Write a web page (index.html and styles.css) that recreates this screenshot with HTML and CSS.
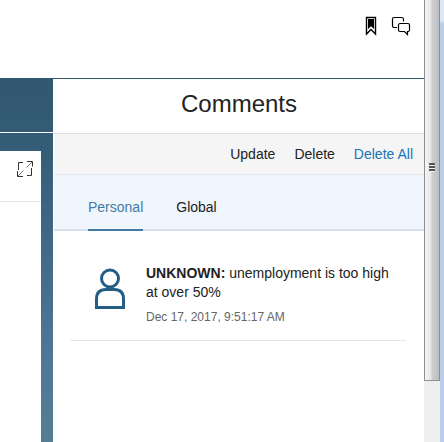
FILE: index.html
```html
<!DOCTYPE html>
<html lang="en">
<head>
    <meta charset="UTF-8">
    <meta name="viewport" content="width=device-width, initial-scale=1.0">
    <title>Comments</title>
    <link rel="stylesheet" href="styles.css">
</head>
<body>

<div class="app">
    <header class="topbar">
        <button class="icon-btn" type="button" aria-label="Bookmarks">
            <svg width="12" height="20" viewBox="0 0 12 20">
                <path d="M1.500 1.500h9v16.500L6 13.500 1.500 18z" fill="#fff" stroke="#000" stroke-width="1.400"/>
                <path d="M3 3h6v10L6 10.300 3 13z" fill="#000"/>
            </svg>
        </button>
        <button class="icon-btn" type="button" aria-label="Comments">
            <svg width="20" height="20" viewBox="0 0 20 20" fill="none" stroke="#000" stroke-width="1.200">
                <path d="M6 11.500H3Q1.500 11.500 1.500 9.500V3Q1.500 1.500 3 1.500H10.500Q12.500 1.500 12.500 3.500V5.500"/>
                <path d="M9 7.500H17Q18.500 7.500 18.500 9V14Q18.500 15.500 17 15.500H16.500V18.500L13.500 15.500H9Q7.500 15.500 7.500 14V9Q7.500 7.500 9 7.500z"/>
            </svg>
        </button>
    </header>

    <div class="workspace">
        <main class="canvas">
            <div class="canvas-header"></div>
            <div class="canvas-body">
                <section class="card">
                    <div class="card-header">
                        <button class="icon-btn" type="button" aria-label="Full screen">
                            <svg width="16" height="16" viewBox="0 0 16 16" fill="none" stroke="#333">
                                <path d="M6 1.500H1.500V9M10 14.500H14.500V7M10 .5H15.500V5.500M.5 10V15.500H6"/>
                                <path d="M15 1L9.500 6.500M1 15L6.500 9.500" stroke="#777"/>
                            </svg>
                        </button>
                    </div>
                </section>
            </div>
        </main>

        <aside class="panel">
            <h1 class="panel-title">Comments</h1>
            <div class="toolbar">
                <button class="text-btn" type="button">Update</button>
                <button class="text-btn" type="button">Delete</button>
                <button class="text-btn text-btn-blue" type="button">Delete All</button>
            </div>
            <nav class="tabs">
                <a class="tab active" href="#personal">Personal</a>
                <a class="tab" href="#global">Global</a>
            </nav>
            <div class="comments" id="personal">
                <article class="comment">
                    <svg class="avatar" width="32" height="42" viewBox="0 0 32 42" fill="none" stroke="#235d84" stroke-width="3">
                        <circle cx="16" cy="10.500" r="8.500"/>
                        <path d="M2.500 39.500V31Q2.500 21.500 12 21.500H20Q29.500 21.500 29.500 31V39.500z"/>
                    </svg>
                    <div class="comment-content">
                        <p class="comment-text"><strong>UNKNOWN:</strong> <span>unemployment is too high at over 50%</span></p>
                        <time class="comment-date">Dec 17, 2017, 9:51:17 AM</time>
                    </div>
                </article>
            </div>
        </aside>
    </div>
</div>

<div class="scrollbar">
    <div class="scroll-thumb">
        <span class="grip"></span>
    </div>
</div>
<div class="window-edge"></div>

</body>
</html>
```
FILE: styles.css
```css
* {
    box-sizing: border-box;
}

body {
    display: flex;
    min-height: 100vh;
    margin: 0;
    font-family: "Liberation Sans", Arial, sans-serif;
    font-size: 14px;
    color: #222;
    background-color: #fff;
}

button {
    padding: 0;
    border: none;
    background: none;
    font: inherit;
    color: inherit;
    cursor: pointer;
}

.app {
    flex: 1;
    min-width: 0;
    display: flex;
    flex-direction: column;
}

.topbar {
    display: flex;
    justify-content: flex-end;
    gap: 14px;
    padding: 16px 13px 42px;
    border-bottom: 1px solid #31586f;
}

.icon-btn {
    display: flex;
}

.workspace {
    flex: 1;
    display: flex;
}

.canvas {
    flex: 1;
    display: flex;
    flex-direction: column;
    background: linear-gradient(#31586f, #365d78 20%, #4d7798 75%, #557d94);
}

.canvas-header {
    height: 54px;
    border-bottom: 1px solid #fff;
}

.canvas-body {
    flex: 1;
    display: flex;
    padding: 18px 12px 0 0;
}

.card {
    flex: 1;
    background-color: #fff;
}

.card-header {
    display: flex;
    justify-content: flex-end;
    padding: 10px 8px 24px;
    border-bottom: 1px solid #e8e8e8;
}

.panel {
    width: 371px;
    padding-left: 1px;
    background-color: #fff;
}

.panel-title {
    margin: 0;
    padding: 10px 0 14px;
    border-bottom: 1px solid #ddd;
    font-size: 24px;
    line-height: 30px;
    font-weight: normal;
    text-align: center;
}

.toolbar {
    display: flex;
    justify-content: flex-end;
    gap: 19px;
    padding: 10px 11px;
    border-bottom: 1px solid #e5e9ec;
    background-color: #f5f5f5;
}

.text-btn {
    line-height: 20px;
}

.text-btn-blue {
    color: #1a74b4;
}

.tabs {
    display: flex;
    gap: 33px;
    padding: 0 34px;
    background-color: #eff6fd;
    box-shadow: inset 0 -2px #d5e2ec;
}

.tab {
    padding: 22px 0 12px;
    border-bottom: 2px solid transparent;
    line-height: 20px;
    color: #222;
    text-decoration: none;
}

.tab.active {
    border-color: #427ca6;
    color: #427ca6;
}

.comments {
    padding: 33px 18px 0 16px;
}

.comment {
    display: flex;
    gap: 20px;
    padding: 0 12px 14px 24px;
    border-bottom: 1px solid #e5e5e5;
}

.avatar {
    flex: none;
    margin-top: 4px;
}

.comment-text {
    margin: 0;
    line-height: 19px;
}

.comment-date {
    display: block;
    margin-top: 7px;
    padding-bottom: 1px;
    font-size: 12px;
    line-height: 16px;
    color: #666;
}

.scrollbar {
    width: 16px;
    display: flex;
    flex-direction: column;
    background-color: #efefef;
}

.scroll-thumb {
    height: 381px;
    display: flex;
    justify-content: center;
    padding-top: 163px;
    border: 1px solid #8e8e93;
    border-top: none;
    background: linear-gradient(to right, #f5f5f5, #e6e6e8 40%, #cfcfd3 50%, #bdbdc2);
}

.grip {
    width: 6px;
    height: 9px;
    background: repeating-linear-gradient(#555 0 2px, #eee 2px 3px);
}

.window-edge {
    width: 4px;
    background: linear-gradient(#dce8f6 20px, #b7cfe9 24px);
}
```
